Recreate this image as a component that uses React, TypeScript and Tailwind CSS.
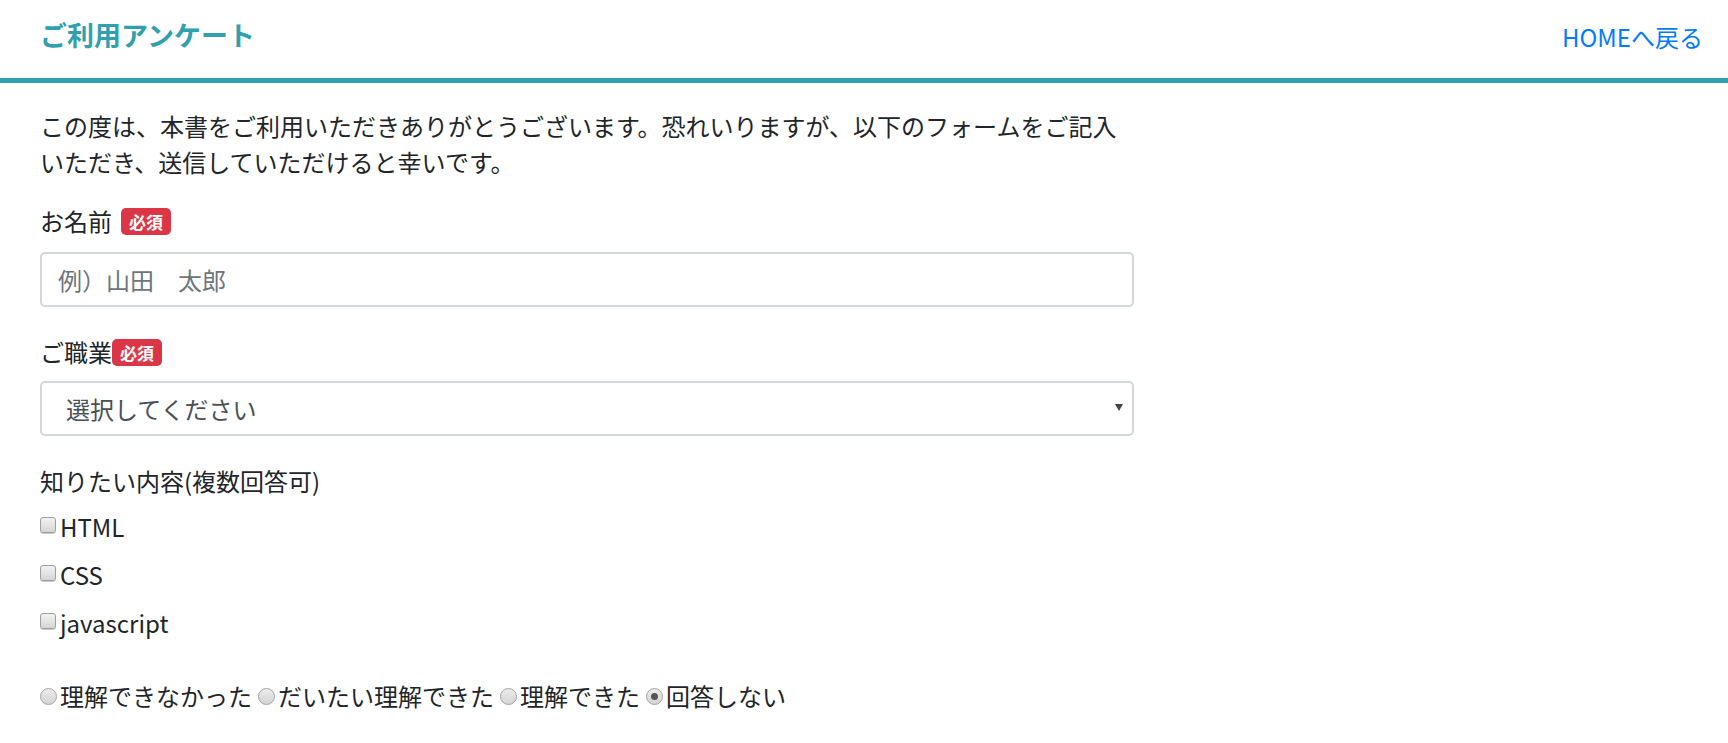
import React, { useState } from 'react';

const topics = ['HTML', 'CSS', 'javascript'];
const levels = ['理解できなかった', 'だいたい理解できた', '理解できた', '回答しない'];

const Required: React.FC = () => (
  <span className="inline-flex items-center justify-center w-[50px] h-[27px] rounded-[5px] bg-[#dc3545] text-white text-[17px] font-bold leading-none">
    必須
  </span>
);

const Checkbox: React.FC<{ label: string; className?: string }> = ({ label, className }) => {
  const [checked, setChecked] = useState(false);
  return (
    <label className={`flex items-center h-[36px] text-[24px] leading-[36px] ${className ?? ''}`}>
      <input
        type="checkbox"
        checked={checked}
        onChange={() => setChecked(!checked)}
        className="appearance-none w-[16px] h-[16px] mt-[-4px] mr-[4px] rounded-[3px] border border-[#9e9e9e] bg-linear-to-b from-[#f2f2f2] to-[#d6d6d6] shadow-[0_1px_0_#c8c8c8] checked:bg-[#5b5b5b]"
      />
      {label}
    </label>
  );
};

export default function App() {
  const [level, setLevel] = useState(3);

  return (
    <div className="min-h-screen bg-white text-[#212529] font-['Noto_Sans_CJK_JP',sans-serif]">
      <header className="flex items-start justify-between h-[83px] border-b-[5px] border-[#30a0ae] pl-[40px] pr-[25px]">
        <h1 className="mt-[17px] text-[27px] leading-[36px] font-bold text-[#30a0ae]">ご利用アンケート</h1>
        <a href="#" className="mt-[19px] text-[24px] leading-[36px] text-[#007bff]">
          HOMEへ戻る
        </a>
      </header>

      <main className="ml-[40px] w-[1094px]">
        <p className="mt-[25px] text-[24px] leading-[36px]">
          この度は、本書をご利用いただきありがとうございます。恐れいりますが、以下のフォームをご記入いただき、送信していただけると幸いです。
        </p>

        <div className="mt-[23px] flex items-center h-[36px] text-[24px] gap-[9px]">
          <span>お名前</span>
          <Required />
        </div>
        <input
          type="text"
          placeholder="例）山田　太郎"
          className="mt-[13px] block w-full h-[55px] pl-[16px] border-2 border-[#d3d7db] rounded-[5px] text-[24px] placeholder:text-[#6c757d] outline-none"
        />

        <div className="mt-[27px] flex items-center h-[36px] text-[24px]">
          <span>ご職業</span>
          <Required />
        </div>
        <div className="relative mt-[11px]">
          <select
            defaultValue=""
            className="appearance-none block w-full h-[55px] pl-[24px] border-2 border-[#d3d7db] rounded-[5px] bg-white text-[24px] text-[#495057] outline-none"
          >
            <option value="">選択してください</option>
            <option>会社員</option>
            <option>学生</option>
            <option>その他</option>
          </select>
          <svg className="absolute right-[11px] top-[23px] pointer-events-none" width="8" height="7" viewBox="0 0 8 7">
            <polygon points="0,0 8,0 4,7" fill="#444" />
          </svg>
        </div>

        <div className="mt-[27px] h-[36px] text-[24px] leading-[36px]">知りたい内容(複数回答可)</div>
        {topics.map((t, i) => (
          <Checkbox key={t} label={t} className={i === 0 ? 'mt-[10px]' : 'mt-[12px]'} />
        ))}

        <div className="mt-[37px] flex items-center h-[36px] text-[24px] leading-[36px]">
          {levels.map((l, i) => (
            <label key={l} className="flex items-center mr-[6px]">
              <input
                type="radio"
                name="level"
                checked={level === i}
                onChange={() => setLevel(i)}
                className="appearance-none grid place-content-center w-[17px] h-[17px] mr-[3px] rounded-full border border-[#a3a3a3] bg-linear-to-b from-[#ececec] to-[#d4d4d4] before:content-[''] before:w-[7px] before:h-[7px] before:rounded-full before:bg-transparent checked:before:bg-[#555]"
              />
              {l}
            </label>
          ))}
        </div>
      </main>
    </div>
  );
}
